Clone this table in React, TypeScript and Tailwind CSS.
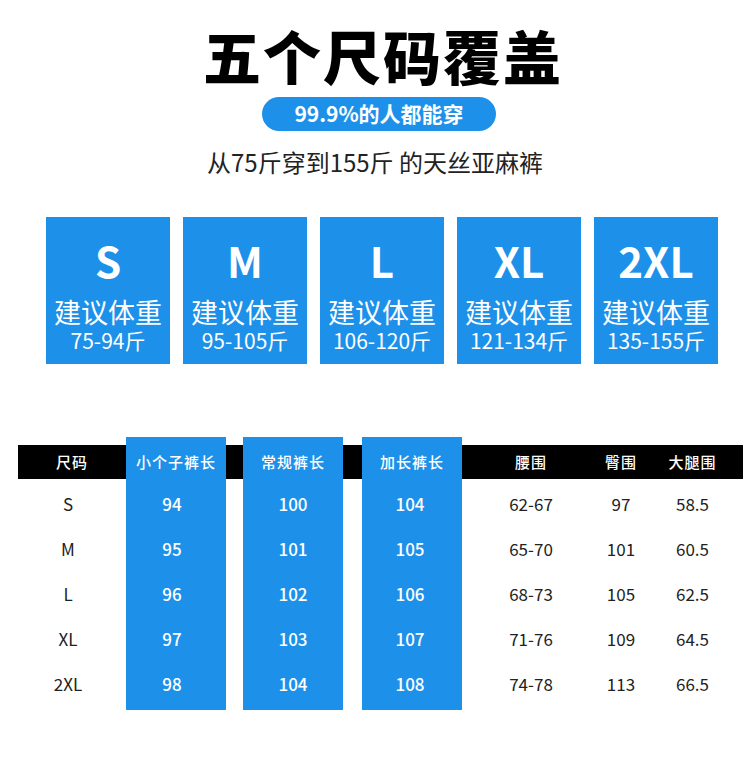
const sizes = [
  { s: 'S', w: '75-94斤' },
  { s: 'M', w: '95-105斤' },
  { s: 'L', w: '106-120斤' },
  { s: 'XL', w: '121-134斤' },
  { s: '2XL', w: '135-155斤' },
]

const rows = [
  ['S', '94', '100', '104', '62-67', '97', '58.5'],
  ['M', '95', '101', '105', '65-70', '101', '60.5'],
  ['L', '96', '102', '106', '68-73', '105', '62.5'],
  ['XL', '97', '103', '107', '71-76', '109', '64.5'],
  ['2XL', '98', '104', '108', '74-78', '113', '66.5'],
]

// column widths, blue flag, header text, data index
const cols = [
  { w: 'w-[108px]', blue: false, head: '尺码', i: 0, pad: 'pr-[8px]' },
  { w: 'w-[100px]', blue: true, head: '小个子裤长', i: 1, pad: 'pr-[8px]' },
  { w: 'w-[17px]', blue: false, head: '', i: -1, pad: '' },
  { w: 'w-[100px]', blue: true, head: '常规裤长', i: 2, pad: '' },
  { w: 'w-[19px]', blue: false, head: '', i: -1, pad: '' },
  { w: 'w-[100px]', blue: true, head: '加长裤长', i: 3, pad: 'pr-[4px]' },
  { w: 'w-[138px]', blue: false, head: '腰围', i: 4, pad: '' },
  { w: 'w-[42px]', blue: false, head: '臀围', i: 5, pad: '' },
  { w: 'w-[101px]', blue: false, head: '大腿围', i: 6, pad: '' },
]

const App = () => {
  return (
    <div className="w-[750px] h-[771px] bg-white flex flex-col items-center font-['Noto_Sans_CJK_SC','Noto_Sans',sans-serif] text-black">
      <h1 className="mt-[26px] ml-[16px] text-[58px] leading-[58px] font-black tracking-[2px]">五个尺码覆盖</h1>
      <div className="mt-[13px] ml-[8px] w-[234px] h-[34px] rounded-full bg-[#1d91e9] flex items-center justify-center text-white text-[21px] font-bold">
        99.9%的人都能穿
      </div>
      <p className="mt-[17px] text-[24px] leading-[27px] text-[#222]">从75斤穿到155斤 的天丝亚麻裤</p>

      <div className="mt-[42px] flex gap-[13px] ml-[14px]">
        {sizes.map((b) => (
          <div key={b.s} className="w-[124px] h-[147px] bg-[#1d91e9] flex flex-col items-center text-white">
            <div className="mt-[20px] text-[42px] leading-[46px] font-bold">{b.s}</div>
            <div className="mt-[15px] text-[27px] leading-[27px]">建议体重</div>
            <div className="mt-[4px] text-[21px] leading-[22px]">{b.w}</div>
          </div>
        ))}
      </div>

      <div className="mt-[73px] self-start ml-[18px] flex">
        {cols.map((c, k) => (
          <div key={k} className={`${c.w} flex flex-col ${c.blue ? 'bg-[#1d91e9] pb-[4px]' : ''}`}>
            <div className="h-[8px]" />
            <div className={`h-[34px] flex items-center justify-center text-white text-[15px] font-medium tracking-[1px] ${c.blue ? '' : 'bg-black'}`}>
              {c.head}
            </div>
            <div className="h-[2px]" />
            {rows.map((r, j) => (
              <div
                key={j}
                className={`h-[45px] flex items-center justify-center text-[17px] ${c.blue ? 'text-white font-medium' : 'text-[#222]'} ${c.pad}`}
              >
                {c.i >= 0 ? r[c.i] : ''}
              </div>
            ))}
          </div>
        ))}
      </div>
    </div>
  )
}

export default App
